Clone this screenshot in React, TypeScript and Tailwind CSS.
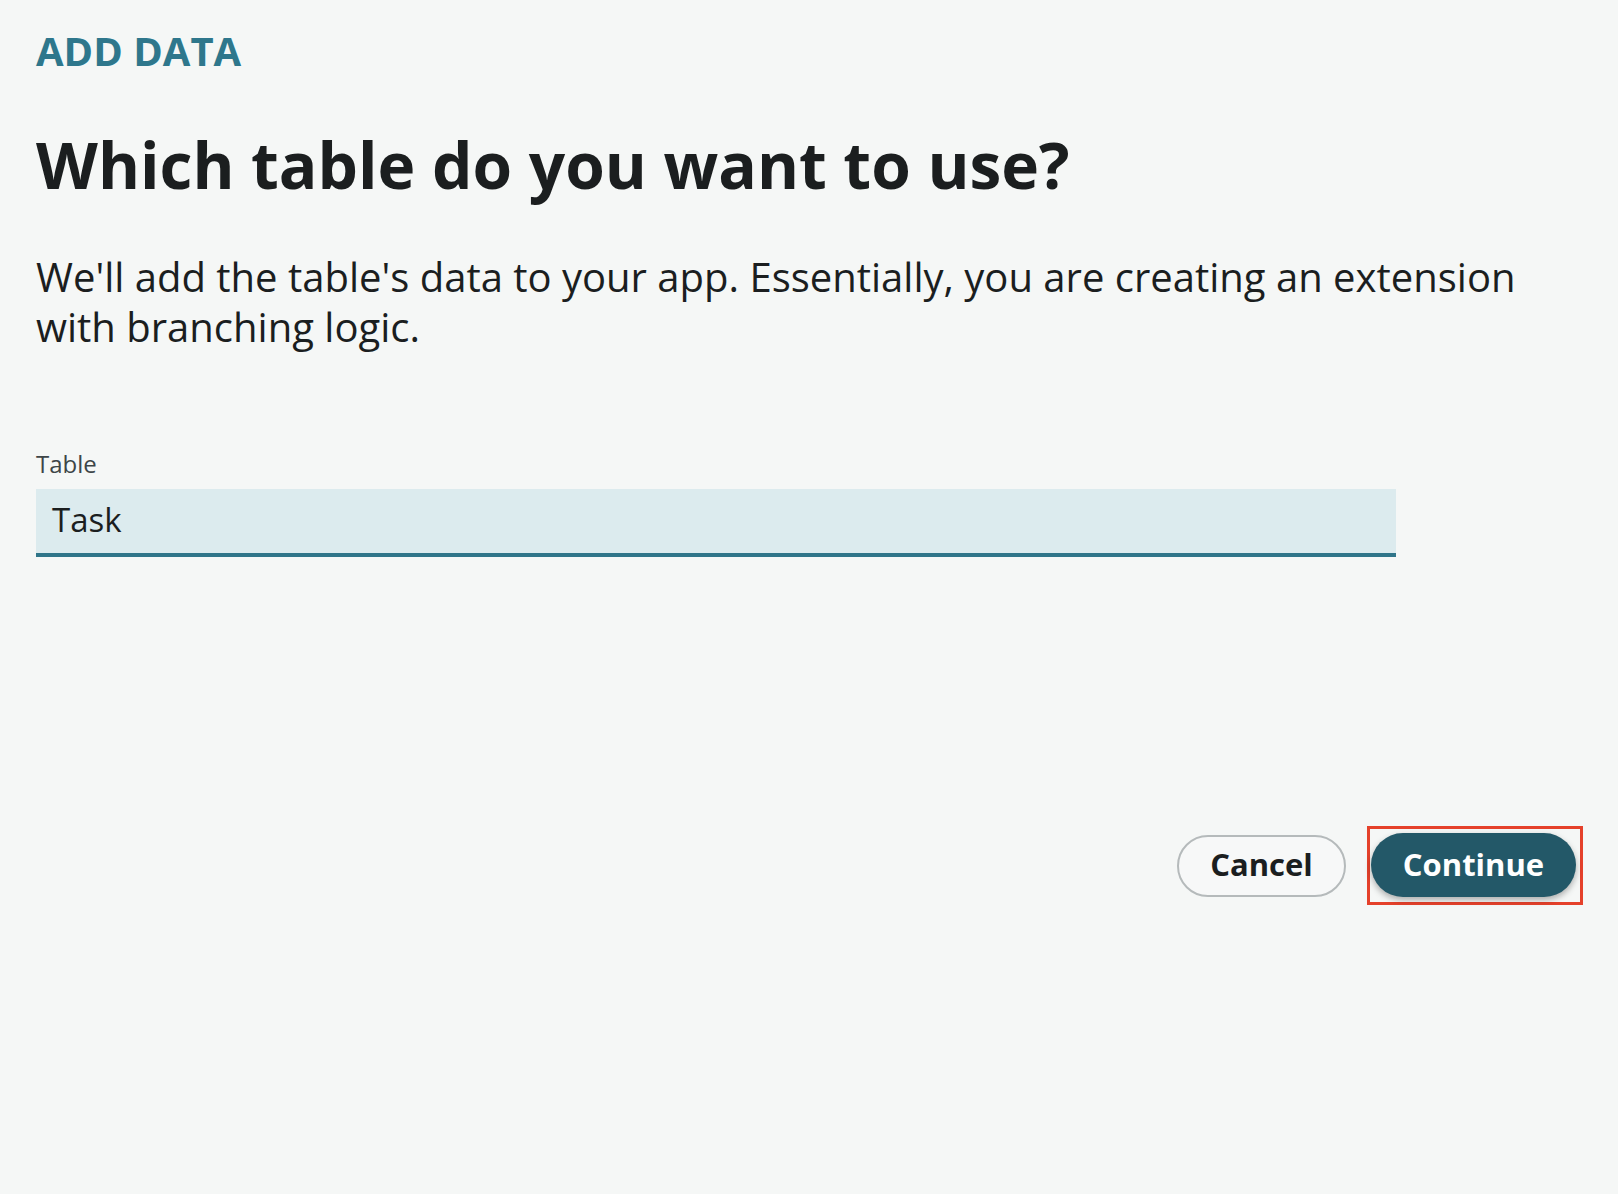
import React from "react";

export default function App() {
  return (
    <div className="min-h-screen w-full bg-[#f5f7f6] font-['Open_Sans',sans-serif] text-[#1b1e1f]">
      <div className="flex flex-col pl-[36px] pr-[35px] pt-[31px]">
        {/* Step label */}
        <div className="text-[40px] font-bold leading-none text-[#2e778c]">
          ADD DATA
        </div>

        {/* Title */}
        <h1 className="mt-[62px] text-[64px] font-bold leading-none">
          Which table do you want to use?
        </h1>

        <p className="mt-[55px] max-w-[1525px] text-[40px] leading-[50px]">
          We'll add the table's data to your app. Essentially, you are creating an extension with branching logic.
        </p>

        {/* Table picker */}
        <div className="mt-[100px] flex flex-col">
          <label className="text-[24px] leading-none text-[#3d4547]">Table</label>
          <div className="mt-[13px] flex h-[68px] w-[1360px] items-center border-b-4 border-[#2f7589] bg-[#dcebee] pb-[4px] pl-[16px]">
            <span className="text-[33px] leading-none">Task</span>
          </div>
        </div>

        {/* Actions */}
        <div className="mt-[269px] flex items-center justify-end gap-[21px]">
          <button className="flex h-[62px] w-[169px] items-center justify-center rounded-full border-2 border-[#b5babb] bg-[#f7f8f8] pb-[2px] text-[31px] font-bold">
            Cancel
          </button>
          <div className="border-[3px] border-[#e5412b] pb-[5px] pl-[1px] pr-[4px] pt-[4px]">
            <button className="flex h-[64px] w-[205px] items-center justify-center rounded-full bg-[#235868] pb-[2px] text-[31px] font-bold text-white shadow-[0_3px_6px_rgba(0,0,0,0.3)]">
              Continue
            </button>
          </div>
        </div>
      </div>
    </div>
  );
}
